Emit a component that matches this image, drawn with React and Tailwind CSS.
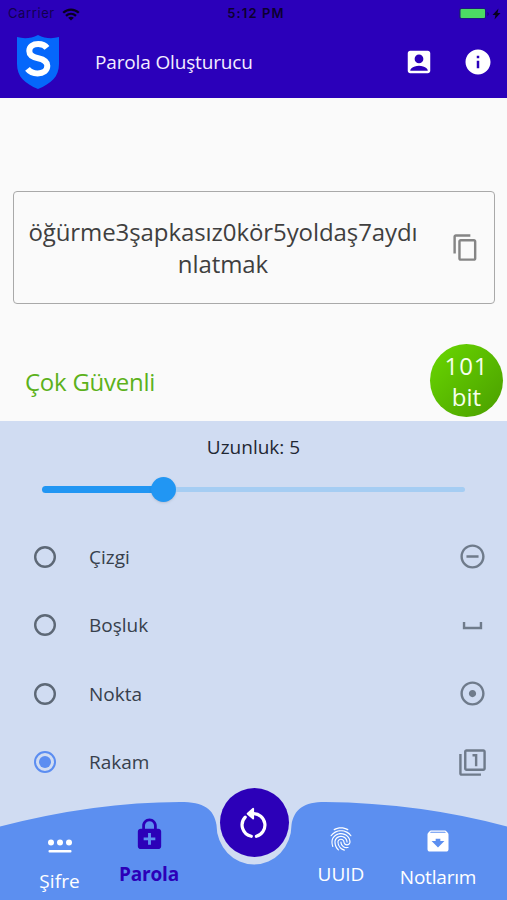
/**
 * Passphrase generator screen.
 * Shows the generated passphrase, its strength, the word count slider
 * and the list of separators, with the tab bar at the bottom.
 */
import React, {useState} from 'react';
import {
  MdAccountBox,
  MdAdjust,
  MdArchive,
  MdContentCopy,
  MdEnhancedEncryption,
  MdFilter1,
  MdFingerprint,
  MdInfo,
  MdRemoveCircleOutline,
  MdSpaceBar,
} from 'react-icons/md';

const separators = [
  {id: 'dash', label: 'Çizgi', Icon: MdRemoveCircleOutline},
  {id: 'space', label: 'Boşluk', Icon: MdSpaceBar},
  {id: 'dot', label: 'Nokta', Icon: MdAdjust},
  {id: 'digit', label: 'Rakam', Icon: MdFilter1},
];

function StatusBar() {
  return (
    <div className="grid h-[28px] grid-cols-3 items-center pl-[8px] pr-[6px] font-['Inter'] text-[13px] text-[#12004f]">
      <div className="flex items-center gap-[7px]">
        <span className="tracking-[0.6px]">Carrier</span>
        <svg width="18" height="13" viewBox="0 0 18 13" fill="none" stroke="#08001f" strokeWidth="2.3">
          <path d="M1.2 4.8C5.6.5 12.4.5 16.8 4.8"/>
          <path d="M4 7.8c2.9-2.7 7.1-2.7 10 0"/>
          <path d="M9 12.6 6.1 9.8c1.7-1.5 4.1-1.5 5.8 0z" fill="#08001f" stroke="none"/>
        </svg>
      </div>
      <span className="pl-[3px] text-center text-[13px] font-semibold tracking-[1.1px] text-[#0c0030]">5:12 PM</span>
      <svg className="-mt-[1px] justify-self-end" width="43" height="14" viewBox="0 0 43 14">
        <rect x="1" y="1" width="27" height="11" rx="2.5" fill="#1d1a80"/>
        <rect x="2.5" y="2" width="24.500" height="9" rx="1" fill="#4cdb64"/>
        <path d="M29.5 5v4c1.6-.6 1.6-3.4 0-4z" fill="#14006a"/>
        <path d="M40.500 1.500l-6 6.500h3l-1 4.500 6-6.500h-3z" fill="#08001f"/>
      </svg>
    </div>
  );
}

function ShieldLogo() {
  return (
    <svg className="-mt-[2px] h-[54px] w-[44px]" viewBox="0 0 44 54">
      <path
        d="M1 2c7 2 14 1.500 21-2 7 3.500 14 4 21 2V29c0 13-8 19.500-21 25C9 48.500 1 42 1 29z"
        fill="#0567fb"
      />
      <path
        d="M31 12.800C29 10.200 26.300 9.100 22.300 9.100c-5.500 0-9 2.600-9 6.900 0 4.700 3.600 6.200 8.900 7.300 5.800 1.300 9.100 3 9.100 7.500 0 4.700-3.900 7.600-9.700 7.600-4.300 0-7.700-1.400-10.100-4.500"
        fill="none"
        stroke="#fff"
        strokeWidth="6"
      />
    </svg>
  );
}

function Radio({checked}) {
  if (checked) {
    return (
      <span className="flex size-[22px] items-center justify-center rounded-full border-[2px] border-[#5b8df1]">
        <span className="size-[12px] rounded-full bg-[#5b8df1]"/>
      </span>
    );
  }
  return (
    <svg width="22" height="22" viewBox="0 0 22 22" fill="none">
      <circle cx="11" cy="11" r="9.800" stroke="#5d6876" strokeWidth="2.400"/>
    </svg>
  );
}

function PinIcon() {
  return (
    <svg width="26" height="16" viewBox="0 0 26 16" fill="#fff">
      <circle cx="4" cy="3.500" r="3"/>
      <circle cx="13" cy="3.500" r="3"/>
      <circle cx="22" cy="3.500" r="3"/>
      <rect x="1.500" y="11" width="23" height="2.600" rx="1"/>
    </svg>
  );
}

function RestartIcon() {
  return (
    <svg width="30" height="34" viewBox="0 0 30 34" fill="none" stroke="#fff" strokeWidth="3.200" strokeLinecap="round">
      <path d="M14 7.700a11.500 11.500 0 0 1 3.400 22.600"/>
      <path d="M6.200 11.200A11.500 11.500 0 0 0 12.300 30.300"/>
      <path d="M8.600 7.700 14.200 2.800v9.800z" fill="#fff" strokeWidth="1.800" strokeLinejoin="round"/>
    </svg>
  );
}

function TabBar({onRefresh}) {
  return (
    <nav className="relative h-[112px] shrink-0">
      <svg className="absolute inset-0" width="507" height="112" viewBox="0 0 507 112">
        <path
          d="M0 38.500Q95 14 180 14C204 14 214 21 216.500 37A37.500 39.500 0 0 0 291.500 37C294 21 304 14 325 14Q420 15 507 38.500V112H0z"
          fill="#5c8ff0"
        />
      </svg>
      <div className="relative grid h-full grid-cols-[118px_62px_148px_26px_153px] text-[19px] leading-[24px] text-white">
        <button className="flex flex-col items-center justify-start pl-[1px] pt-[51px]">
          <PinIcon/>
          <span className="mt-[14px] tracking-[0.1px]">Şifre</span>
        </button>
        <button className="-mx-4 flex flex-col items-center justify-start pt-[29px] text-[#2c00b8]">
          <MdEnhancedEncryption size={35}/>
          <span className="mt-[10px] font-bold tracking-[-0.2px]">Parola</span>
        </button>
        <button
          onClick={onRefresh}
          className="flex size-[69px] items-center justify-center justify-self-center rounded-full bg-[#2c00b8]"
        >
          <RestartIcon/>
        </button>
        <button className="-mx-6 flex flex-col items-center justify-start pt-[37px]">
          <MdFingerprint size={28}/>
          <span className="mt-[9px]">UUID</span>
        </button>
        <button className="flex flex-col items-center justify-start pt-[39px] pl-[15px]">
          <MdArchive size={28}/>
          <span className="mt-[10px] tracking-[-0.2px]">Notlarım</span>
        </button>
      </div>
    </nav>
  );
}

export default function App() {
  const [separator, setSeparator] = useState('digit');
  const [length] = useState(5);

  return (
    <div className="flex h-[900px] w-[507px] flex-col overflow-hidden bg-[#fafafa] font-['Open_Sans','Noto_Sans',sans-serif]">
      <header className="h-[98px] shrink-0 bg-[#2b00ba]">
        <StatusBar/>
        <div className="flex h-[69px] items-center pl-[16px] pr-[14px]">
          <ShieldLogo/>
          <h1 className="ml-[35px] text-[19px] tracking-[-0.15px] text-[#f3edff]">Parola Oluşturucu</h1>
          <div className="-mt-[1px] ml-auto flex items-center gap-[29px] text-white">
            <MdAccountBox size={30}/>
            <MdInfo size={30}/>
          </div>
        </div>
      </header>

      {/* Generated passphrase */}
      <section className="ml-[13px] mr-[12px] mt-[93px] flex h-[113px] shrink-0 items-center rounded-[4px] border border-[#a9a9a9] pl-[13px] pr-[14px]">
        <p className="w-[392px] text-center text-[24px] leading-[32px] tracking-[-0.08px] text-[#3f3f3f]">
          öğürme3şapkasız0kör5yoldaş7aydı
          <br/>
          nlatmak
        </p>
        <MdContentCopy className="ml-auto text-[#858585]" size={29}/>
      </section>

      {/* Strength */}
      <section className="flex h-[117px] shrink-0 items-end justify-between pb-[4px] pl-[25px] pr-[4px]">
        <span className="pb-[19px] text-[24px] leading-[32px] tracking-[-0.25px] text-[#5cb11b]">Çok Güvenli</span>
        <div className="flex size-[73px] flex-col items-center justify-center rounded-full bg-gradient-to-br from-[#6ad800] to-[#4a9e00] text-[24px] leading-[31px] text-[#f6ffee]">
          <span className="tracking-[1px]">101</span>
          <span>bit</span>
        </div>
      </section>

      {/* Options */}
      <section className="flex grow flex-col bg-[#d0dcf2]">
        <div className="pt-[13px] text-center text-[19px] leading-[26px] text-[#1f2733]">Uzunluk: {length}</div>
        <div className="mt-[17px] flex h-[25px] items-center pl-[42px]">
          <div className="h-[7px] w-[110px] rounded-l-full bg-[#2196f3]"/>
          <div className="-ml-[1px] size-[25px] rounded-full bg-[#2196f3] shadow-sm"/>
          <div className="h-[5px] w-[289px] rounded-r-sm bg-[#a5cdf3]"/>
        </div>
        <ul className="mt-[20.800px]">
          {separators.map(({id, label, Icon}) => (
            <li
              key={id}
              onClick={() => setSeparator(id)}
              className="flex h-[68.400px] items-center pl-[34px] pr-[20px]"
            >
              <Radio checked={separator === id}/>
              <span className="ml-[33px] text-[19px] text-[#37404c]">{label}</span>
              <Icon className="ml-auto text-[#6f7b8b]" size={29}/>
            </li>
          ))}
        </ul>
        <div className="-mt-[8px]">
          <TabBar/>
        </div>
      </section>
    </div>
  );
}
